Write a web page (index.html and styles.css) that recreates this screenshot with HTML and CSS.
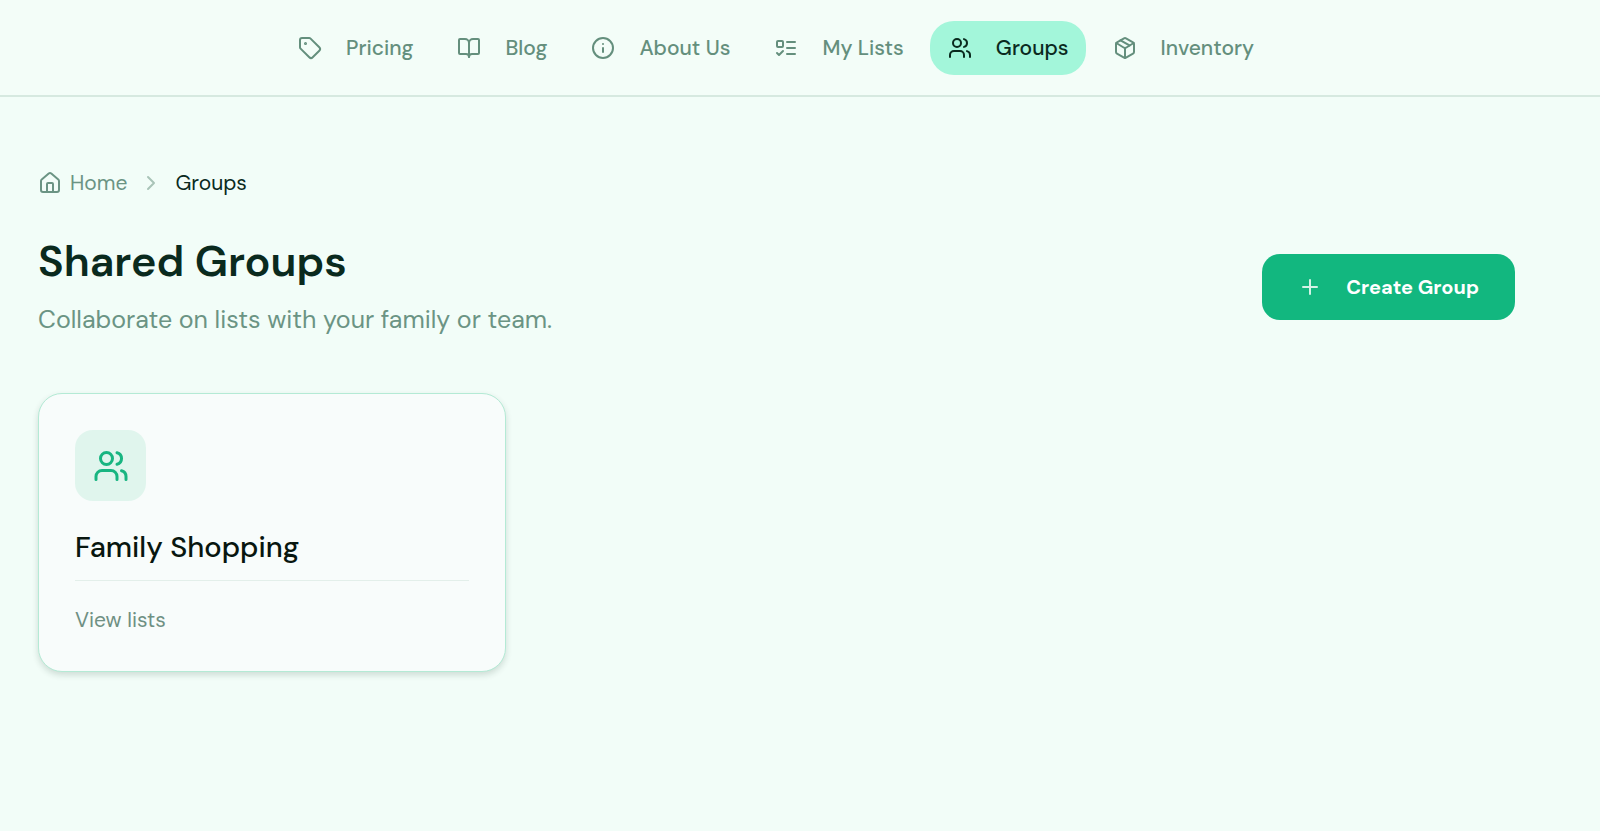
FILE: index.html
```html
<!DOCTYPE html>
<html lang="en">
<head>
<meta charset="utf-8">
<meta name="viewport" content="width=device-width, initial-scale=1">
<title>Shared Groups</title>
<link rel="stylesheet" href="styles.css">
</head>
<body>
<header class="site-header">
  <nav class="nav" aria-label="Main">
    <a class="nav-link" href="#pricing">
      <svg class="icon" viewBox="0 0 24 24" aria-hidden="true"><path d="M12.586 2.586A2 2 0 0 0 11.172 2H4a2 2 0 0 0-2 2v7.172a2 2 0 0 0 .586 1.414l8.704 8.704a2.426 2.426 0 0 0 3.42 0l6.58-6.58a2.426 2.426 0 0 0 0-3.42z"/><circle cx="7.5" cy="7.5" r=".5" fill="currentColor"/></svg>
      Pricing</a>
    <a class="nav-link" href="#blog">
      <svg class="icon" viewBox="0 0 24 24" aria-hidden="true"><path d="M12 7v14"/><path d="M3 18a1 1 0 0 1-1-1V4a1 1 0 0 1 1-1h5a4 4 0 0 1 4 4 4 4 0 0 1 4-4h5a1 1 0 0 1 1 1v13a1 1 0 0 1-1 1h-6a3 3 0 0 0-3 3 3 3 0 0 0-3-3z"/></svg>
      Blog</a>
    <a class="nav-link" href="#about">
      <svg class="icon" viewBox="0 0 24 24" aria-hidden="true"><circle cx="12" cy="12" r="10"/><path d="M12 16v-4"/><path d="M12 8h.01"/></svg>
      About Us</a>
    <a class="nav-link" href="#lists">
      <svg class="icon" viewBox="0 0 24 24" aria-hidden="true"><rect x="3" y="5" width="6" height="6" rx="1"/><path d="m3 17 2 2 4-4"/><path d="M13 6h8"/><path d="M13 12h8"/><path d="M13 18h8"/></svg>
      My Lists</a>
    <a class="nav-link nav-link-active" href="#groups" aria-current="page">
      <svg class="icon" viewBox="0 0 24 24" aria-hidden="true"><path d="M16 21v-2a4 4 0 0 0-4-4H6a4 4 0 0 0-4 4v2"/><circle cx="9" cy="7" r="4"/><path d="M22 21v-2a4 4 0 0 0-3-3.87"/><path d="M16 3.13a4 4 0 0 1 0 7.75"/></svg>
      Groups</a>
    <a class="nav-link" href="#inventory">
      <svg class="icon" viewBox="0 0 24 24" aria-hidden="true"><path d="M11 21.73a2 2 0 0 0 2 0l7-4A2 2 0 0 0 21 16V8a2 2 0 0 0-1-1.73l-7-4a2 2 0 0 0-2 0l-7 4A2 2 0 0 0 3 8v8a2 2 0 0 0 1 1.73z"/><path d="M12 22V12"/><path d="m3.3 7 7.703 4.734a2 2 0 0 0 1.994 0L20.7 7"/><path d="m7.5 4.27 9 5.15"/></svg>
      Inventory</a>
  </nav>
</header>
<main class="page">
  <nav class="breadcrumb" aria-label="Breadcrumb">
    <a class="breadcrumb-link" href="#home">
      <svg class="icon" viewBox="0 0 24 24" aria-hidden="true"><path d="M15 21v-8a1 1 0 0 0-1-1h-4a1 1 0 0 0-1 1v8"/><path d="M3 10a2 2 0 0 1 .709-1.528l7-5.999a2 2 0 0 1 2.582 0l7 5.999A2 2 0 0 1 21 10v9a2 2 0 0 1-2 2H5a2 2 0 0 1-2-2z"/></svg>
      Home</a>
    <svg class="icon breadcrumb-chevron" viewBox="0 0 24 24" aria-hidden="true"><path d="m9 18 6-6-6-6"/></svg>
    <span class="breadcrumb-current" aria-current="page">Groups</span>
  </nav>
  <div class="page-head">
    <div>
      <h1 class="title">Shared Groups</h1>
      <p class="subtitle">Collaborate on lists with your family or team.</p>
    </div>
    <button class="button" type="button">
      <svg class="icon button-icon" viewBox="0 0 24 24" aria-hidden="true"><path d="M5 12h14"/><path d="M12 5v14"/></svg>
      Create Group</button>
  </div>
  <section class="grid">
    <article class="card">
      <div class="card-badge">
        <svg class="icon icon-large" viewBox="0 0 24 24" aria-hidden="true"><path d="M16 21v-2a4 4 0 0 0-4-4H6a4 4 0 0 0-4 4v2"/><circle cx="9" cy="7" r="4"/><path d="M22 21v-2a4 4 0 0 0-3-3.87"/><path d="M16 3.13a4 4 0 0 1 0 7.75"/></svg>
      </div>
      <h2 class="card-title">Family Shopping</h2>
      <a class="card-link" href="#family-shopping">View lists</a>
    </article>
  </section>
</main>
</body>
</html>
```
FILE: styles.css
```css
* { box-sizing: border-box; }

body {
  margin: 0;
  min-height: 100vh;
  background: #f2fdf8;
  color: #0a2a1e;
  font-family: "DM Sans", Roboto, "Liberation Sans", sans-serif;
  font-size: 21px;
  line-height: 30px;
}

a { color: inherit; text-decoration: none; }

.icon {
  width: 24px;
  height: 24px;
  flex: none;
  fill: none;
  stroke: currentColor;
  stroke-width: 2;
  stroke-linecap: round;
  stroke-linejoin: round;
}

.icon-large { width: 36px; height: 36px; }

.site-header {
  padding: 21px 49px 20px 0;
  background: #f3fdf8;
  border-bottom: 2px solid #d6e9e0;
}

.nav {
  display: flex;
  justify-content: center;
  gap: 9px;
}

.nav-link {
  display: flex;
  align-items: center;
  gap: 24px;
  padding: 12px 17px 12px 18px;
  border-radius: 24px;
  color: #648f7d;
  font-weight: 500;
}

.nav-link-active { background: #a3f6da; color: #0a2a1e; }

.page { padding: 71px 85px 48px 38px; }

.breadcrumb {
  display: flex;
  align-items: center;
  gap: 12px;
}

.breadcrumb-link {
  display: flex;
  align-items: center;
  gap: 8px;
  color: #6b9484;
}

.breadcrumb-chevron { color: #a9c4b8; }
.breadcrumb-current { color: #0a2a1e; }

.page-head {
  display: flex;
  align-items: center;
  justify-content: space-between;
  margin-top: 36px;
}

.title {
  margin: 0;
  color: #0a2a1e;
  font-size: 43px;
  line-height: 54px;
  font-weight: 600;
}

.subtitle {
  margin: 12px 0 0;
  color: #6b9484;
  font-size: 25px;
  line-height: 40px;
}

.button {
  display: flex;
  align-items: center;
  gap: 24px;
  padding: 18px 36px;
  border: 0;
  border-radius: 18px;
  background: #12b77f;
  color: #ffffff;
  font: inherit;
  font-size: 20px;
  font-weight: 700;
}

.button-icon { color: #d3f3e7; }

.grid {
  display: grid;
  grid-template-columns: repeat(3, 1fr);
  gap: 36px;
  margin-top: 53px;
}

.card {
  padding: 36px;
  border: 1px solid #b4ead5;
  border-radius: 24px;
  background: #f8fcfb;
  box-shadow: 0 3px 6px rgba(20, 50, 40, 0.16);
}

.card-badge {
  display: grid;
  place-items: center;
  width: 71px;
  height: 71px;
  border-radius: 18px;
  background: #e0f5ed;
  color: #18b581;
}

.card-title {
  margin: 25px 0 0;
  padding-bottom: 12px;
  border-bottom: 1px solid #e3efea;
  color: #08160f;
  font-size: 29px;
  line-height: 42px;
  font-weight: 500;
}

.card-link {
  display: block;
  margin-top: 24px;
  color: #6f9083;
}
```
